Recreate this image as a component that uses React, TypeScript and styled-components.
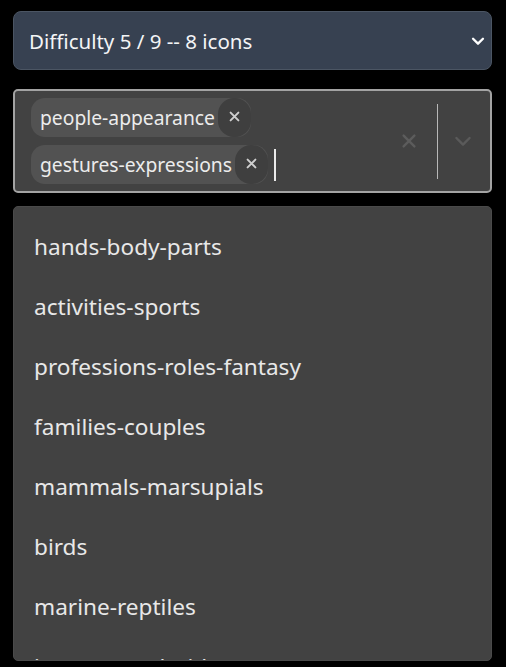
import React from "react";
import styled, { createGlobalStyle } from "styled-components";

const Global = createGlobalStyle`
  html, body { margin: 0; padding: 0; background: #000; }
  body { font-family: "Noto Sans", "Open Sans", sans-serif; }
  * { box-sizing: border-box; }
`;

const Page = styled.div`
  width: 506px;
  height: 667px;
  overflow: hidden;
  padding: 11px 14px 0 13px;
  display: flex;
  flex-direction: column;
  align-items: stretch;
  background: #000;
`;

const SelectBox = styled.div`
  flex: none;
  height: 59px;
  border-radius: 8px;
  background: #374151;
  border: 1px solid #4b5563;
  display: flex;
  align-items: center;
  padding: 0 4px 0 15px;
  color: #f3f4f6;
  font-size: 20.5px;
  justify-content: space-between;
`;

const Control = styled.div`
  flex: none;
  margin-top: 19px;
  height: 104px;
  border: 2px solid #a3a3a3;
  border-radius: 5px;
  background: #424242;
  display: flex;
  align-items: stretch;
`;

const ValueArea = styled.div`
  flex: 1;
  display: flex;
  flex-direction: column;
  align-items: flex-start;
  justify-content: center;
  gap: 8px;
  padding-left: 16px;
`;

const TagRow = styled.div`
  display: flex;
  align-items: center;
`;

const Tag = styled.div`
  height: 39px;
  display: flex;
  align-items: center;
  background: #525252;
  border-radius: 14px;
  padding-left: 9px;
  color: #ececec;
  font-size: 19.3px;
`;

const TagRemove = styled.div`
  width: 33px;
  height: 39px;
  margin-left: 3px;
  border-radius: 16px;
  background: #3f3f3f;
  display: flex;
  align-items: center;
  justify-content: center;
  padding-bottom: 2px;
`;

const Caret = styled.div`
  width: 2px;
  height: 32px;
  background: #eaeaea;
  margin-left: 6px;
`;

const Indicators = styled.div`
  display: flex;
  align-items: center;
  padding-right: 7px;
`;

const IndicatorBtn = styled.div`
  width: 40px;
  display: flex;
  justify-content: center;
  align-items: center;
`;

const Separator = styled.div`
  width: 1px;
  height: 75px;
  background: #b8b8b8;
  margin: 0 5px 0 8px;
`;

const Menu = styled.div`
  flex: none;
  margin-top: 13px;
  height: 455px;
  background: #424242;
  border: 1px solid #4a4a4a;
  border-radius: 5px;
  overflow: hidden;
  padding-top: 9px;
`;

const Option = styled.div`
  height: 60px;
  display: flex;
  align-items: center;
  padding-left: 20px;
  font-size: 22.6px;
  color: #e8e8e8;
`;

const Chevron = ({ color, size, w }: { color: string; size: number; w: number }) => (
  <svg width={size} height={size} viewBox="0 0 20 20" fill="none">
    <path d="M4.5 7.5 L10 13 L15.5 7.5" stroke={color} strokeWidth={w} strokeLinecap="round" strokeLinejoin="round" />
  </svg>
);

const Cross = ({ color, size, w }: { color: string; size: number; w: number }) => (
  <svg width={size} height={size} viewBox="0 0 20 20" fill="none">
    <path d="M4 4 L16 16 M16 4 L4 16" stroke={color} strokeWidth={w} strokeLinecap="round" />
  </svg>
);

const options = [
  "hands-body-parts",
  "activities-sports",
  "professions-roles-fantasy",
  "families-couples",
  "mammals-marsupials",
  "birds",
  "marine-reptiles",
  "insects-arachnids",
];

export default function App() {
  return (
    <>
      <Global />
      <Page>
        <SelectBox>
          <span>Difficulty 5 / 9 -- 8 icons</span>
          <Chevron color="#ffffff" size={18} w={2.6} />
        </SelectBox>
        <Control>
          <ValueArea>
            <TagRow>
              <Tag>
                people-appearance
                <TagRemove>
                  <Cross color="#cfcfcf" size={13} w={3} />
                </TagRemove>
              </Tag>
            </TagRow>
            <TagRow>
              <Tag>
                gestures-expressions
                <TagRemove>
                  <Cross color="#cfcfcf" size={13} w={3} />
                </TagRemove>
              </Tag>
              <Caret />
            </TagRow>
          </ValueArea>
          <Indicators>
            <IndicatorBtn>
              <Cross color="#5c5c5c" size={18} w={2.6} />
            </IndicatorBtn>
            <Separator />
            <IndicatorBtn>
              <Chevron color="#5a5a5a" size={24} w={2} />
            </IndicatorBtn>
          </Indicators>
        </Control>
        <Menu>
          {options.map((o) => (
            <Option key={o}>{o}</Option>
          ))}
        </Menu>
      </Page>
    </>
  );
}
